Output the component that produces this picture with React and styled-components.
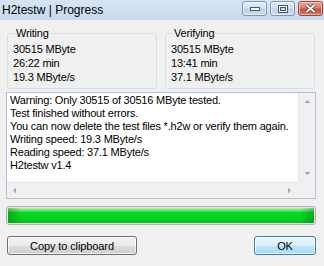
import React from "react";
import styled, { createGlobalStyle } from "styled-components";

const Global = createGlobalStyle`
  html, body { margin: 0; padding: 0; background: #f0f0f0; }
  body { width: 324px; height: 266px; overflow: hidden; }
  * { box-sizing: border-box; }
`;

const UI_FONT = `"Liberation Sans", Arial, sans-serif`;

const Window = styled.div`
  width: 324px;
  height: 266px;
  display: flex;
  flex-direction: column;
  background: #f0f0f0;
  font-family: ${UI_FONT};
  font-size: 11px;
  letter-spacing: -0.2px;
  color: #000;
`;

const TitleBar = styled.div`
  height: 20px;
  flex: none;
  display: flex;
  align-items: center;
  justify-content: space-between;
  padding: 0 1px 0 2px;
  background: linear-gradient(#d6e4f4, #c9daee);
`;

const Title = styled.span`
  font-size: 12px;
  letter-spacing: 0;
  color: #000;
  line-height: 20px;
`;

const CaptionButtons = styled.div`
  display: flex;
  gap: 3px;
  align-self: flex-start;
  margin-top: 1px;
`;

const CaptionButton = styled.div`
  width: 25px;
  height: 15px;
  border-radius: 3px;
  display: flex;
  align-items: center;
  justify-content: center;
  border: 1px solid ${(p) => (p.$close ? "#9a4a3e" : "#8196b2")};
  background: ${(p) =>
    p.$close
      ? "linear-gradient(#e8a493 0%, #d9826f 45%, #c9523c 55%, #d67a5e 100%)"
      : "linear-gradient(#e6eef8 0%, #d3e0f0 45%, #bfd0e6 55%, #cfdcee 100%)"};
  box-shadow: inset 0 0 0 1px rgba(255, 255, 255, 0.45);
`;

const Body = styled.div`
  flex: 1;
  display: flex;
  flex-direction: column;
  padding: 7px 8px 0 6px;
`;

const GroupsRow = styled.div`
  display: grid;
  grid-template-columns: 150px 150px;
  column-gap: 8px;
  padding-left: 1px;
`;

const GroupBox = styled.fieldset`
  margin: 0;
  padding: 2px 5px 4px 5px;
  border: 1px solid #d5dfe5;
  border-radius: 3px;
  min-width: 0;
`;

const Legend = styled.legend`
  padding: 0 1px;
  margin-left: 2px;
  font-size: 11px;
  line-height: 13px;
  color: #000;
`;

const Line = styled.div`
  line-height: 14px;
  white-space: nowrap;
`;

const LogBox = styled.div`
  margin-top: 3px;
  height: 107px;
  border: 1px solid #abc3dd;
  background: #fff;
  display: grid;
  grid-template-columns: 1fr 17px;
  grid-template-rows: 1fr 16px;
`;

const LogText = styled.div`
  padding: 1px 3px;
  line-height: 13px;
  white-space: pre;
  overflow: hidden;
`;

const ScrollV = styled.div`
  background: #f0f0f0;
  border-left: 1px solid #e6e6e6;
  display: flex;
  flex-direction: column;
  justify-content: space-between;
  align-items: center;
  padding: 6px 0;
`;

const ScrollH = styled.div`
  background: #f0f0f0;
  border-top: 1px solid #e6e6e6;
  display: flex;
  justify-content: space-between;
  align-items: center;
  padding: 0 6px 0 5px;
`;

const Corner = styled.div`
  background: #f0f0f0;
`;

const Progress = styled.div`
  margin-top: 7px;
  height: 19px;
  border: 1px solid #b2b2b2;
  border-radius: 3px;
  padding: 1px;
  background: #e6e6e6;
`;

const ProgressFill = styled.div`
  height: 100%;
  border-radius: 1px;
  background:
    linear-gradient(90deg, rgba(0, 90, 20, 0.35) 0px, rgba(0, 90, 20, 0) 14px, rgba(0, 90, 20, 0) calc(100% - 14px), rgba(0, 90, 20, 0.35) 100%),
    linear-gradient(#b8f3b8 0%, #62e46a 18%, #0fd626 30%, #03d11d 70%, #02c41a 100%);
`;

const ButtonRow = styled.div`
  margin-top: 11px;
  display: flex;
  justify-content: space-between;
  padding-left: 1px;
`;

const Button = styled.button`
  font-family: ${UI_FONT};
  font-size: 11px;
  letter-spacing: -0.1px;
  color: #000;
  width: ${(p) => p.$w}px;
  height: 19px;
  padding: 0;
  border-radius: 3px;
  border: 1px solid ${(p) => (p.$default ? "#3c7fb1" : "#707070")};
  background: ${(p) =>
    p.$default
      ? "linear-gradient(#eaf6fd 0%, #d9f0fc 50%, #bee6fd 51%, #a7d9f5 100%)"
      : "linear-gradient(#f2f2f2 0%, #ebebeb 50%, #dddddd 51%, #cfcfcf 100%)"};
  box-shadow: inset 0 0 0 1px rgba(255, 255, 255, 0.7);
`;

const Arrow = ({ dir }) => {
  const pts = {
    up: "0,4 3,1 6,4",
    down: "0,1 3,4 6,1",
    left: "4,0 1,3 4,6",
    right: "1,0 4,3 1,6",
  }[dir];
  const vert = dir === "up" || dir === "down";
  return (
    <svg width={vert ? 7 : 5} height={vert ? 5 : 7} viewBox={vert ? "0 0 6 5" : "0 0 5 6"}>
      <polygon points={pts} fill="#a8a8a8" />
    </svg>
  );
};

export default function App() {
  return (
    <>
      <Global />
      <Window>
        <TitleBar>
          <Title>H2testw | Progress</Title>
          <CaptionButtons>
            <CaptionButton>
              <svg width="10" height="4" viewBox="0 0 10 4">
                <rect x="0.5" y="0.5" width="9" height="3" fill="#fff" stroke="#4a5a70" />
              </svg>
            </CaptionButton>
            <CaptionButton>
              <svg width="10" height="8" viewBox="0 0 10 8">
                <rect x="0.5" y="0.5" width="9" height="7" fill="#fff" stroke="#4a5a70" />
                <rect x="2.5" y="2.5" width="5" height="3" fill="#c9d7ea" stroke="#4a5a70" />
              </svg>
            </CaptionButton>
            <CaptionButton $close>
              <svg width="11" height="9" viewBox="0 0 11 9">
                <path d="M1.5 1 L9.5 8 M9.5 1 L1.5 8" stroke="#6b2a20" strokeWidth="3.4" />
                <path d="M1.5 1 L9.5 8 M9.5 1 L1.5 8" stroke="#fff" strokeWidth="2" />
              </svg>
            </CaptionButton>
          </CaptionButtons>
        </TitleBar>
        <Body>
          <GroupsRow>
            <GroupBox>
              <Legend>Writing</Legend>
              <Line>30515 MByte</Line>
              <Line>26:22 min</Line>
              <Line>19.3 MByte/s</Line>
            </GroupBox>
            <GroupBox>
              <Legend>Verifying</Legend>
              <Line>30515 MByte</Line>
              <Line>13:41 min</Line>
              <Line>37.1 MByte/s</Line>
            </GroupBox>
          </GroupsRow>
          <LogBox>
            <LogText>
              {`Warning: Only 30515 of 30516 MByte tested.
Test finished without errors.
You can now delete the test files *.h2w or verify them again.
Writing speed: 19.3 MByte/s
Reading speed: 37.1 MByte/s
H2testw v1.4`}
            </LogText>
            <ScrollV>
              <Arrow dir="up" />
              <Arrow dir="down" />
            </ScrollV>
            <ScrollH>
              <Arrow dir="left" />
              <Arrow dir="right" />
            </ScrollH>
            <Corner />
          </LogBox>
          <Progress>
            <ProgressFill />
          </Progress>
          <ButtonRow>
            <Button $w={130}>Copy to clipboard</Button>
            <Button $w={62} $default>OK</Button>
          </ButtonRow>
        </Body>
      </Window>
    </>
  );
}
